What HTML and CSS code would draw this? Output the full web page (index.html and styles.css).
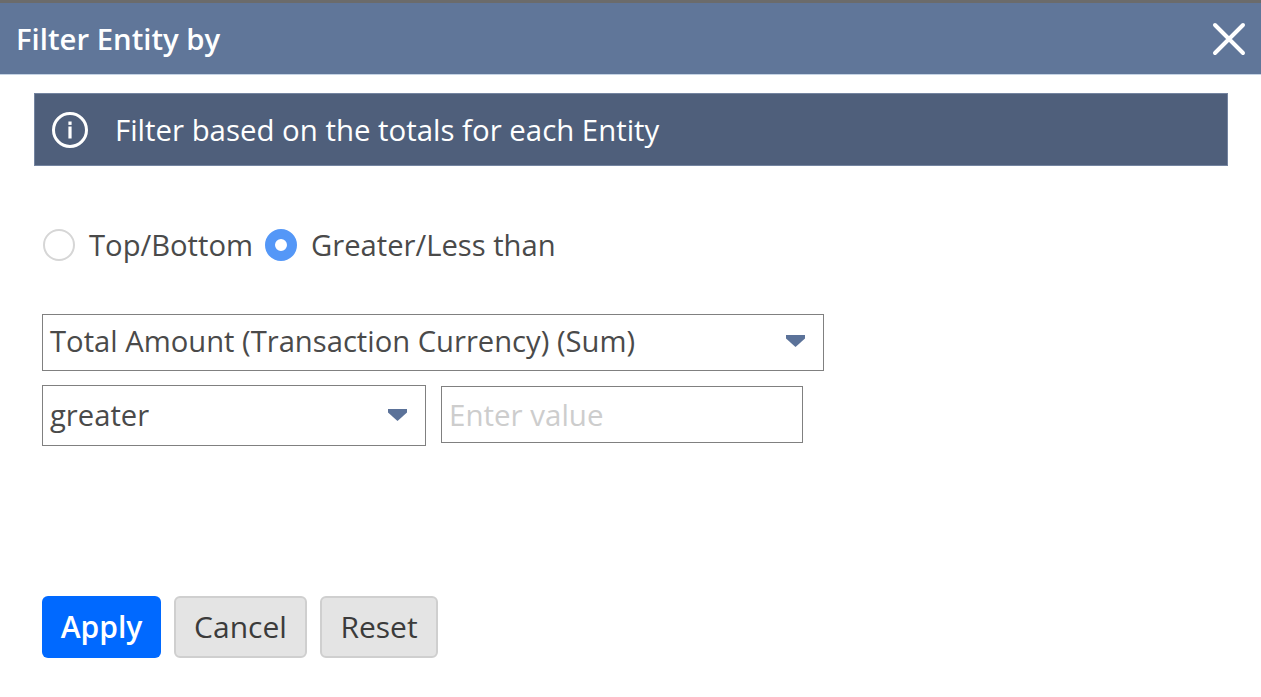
FILE: index.html
```html
<!DOCTYPE html>
<html lang="en">
<head>
    <meta charset="UTF-8">
    <title>Filter Entity by</title>
    <link rel="stylesheet" href="styles.css">
</head>
<body>

<div class="dialog">
    <div class="dialog-header">
        <div class="dialog-title">Filter Entity by</div>
        <svg class="close-icon" width="34" height="34" viewBox="0 0 34 34">
            <path d="M3 3L31 31M31 3L3 31" stroke="#fff" stroke-width="4" stroke-linecap="round" fill="none"/>
        </svg>
    </div>

    <div class="dialog-body">
        <div class="info-banner">
            <svg class="info-icon" width="38" height="38" viewBox="0 0 38 38">
                <circle cx="19" cy="19" r="16.5" stroke="#fff" stroke-width="3" fill="none"/>
                <rect x="17.4" y="10.5" width="3.2" height="3.4" fill="#fff"/>
                <rect x="17.4" y="15.5" width="3.2" height="12" fill="#fff"/>
            </svg>
            <span>Filter based on the totals for each Entity</span>
        </div>

        <div class="radio-row">
            <span class="radio"></span>
            <span class="radio-label">Top/Bottom</span>
            <span class="radio checked"></span>
            <span class="radio-label">Greater/Less than</span>
        </div>

        <div class="select select-wide">
            <span>Total Amount (Transaction Currency) (Sum)</span>
            <span class="caret"></span>
        </div>

        <div class="filter-row">
            <div class="select select-small">
                <span>greater</span>
                <span class="caret"></span>
            </div>
            <div class="value-input">Enter value</div>
        </div>

        <div class="buttons">
            <button class="btn btn-primary">Apply</button>
            <button class="btn btn-cancel">Cancel</button>
            <button class="btn btn-reset">Reset</button>
        </div>
    </div>
</div>

</body>
</html>
```

FILE: styles.css
```css
body {
    margin: 0;
    background-color: #fff;
    font-family: "Open Sans", Arial, sans-serif;
    color: #4a4a4a;
}

.dialog {
    width: 1261px;
    height: 697px;
    overflow: hidden;
    border-top: 3px solid #6b6b6b;
    box-sizing: border-box;
}

.dialog-header {
    height: 72px;
    background-color: #607699;
    border-bottom: 1px solid #c5d3e4;
    box-sizing: border-box;
    display: flex;
    align-items: center;
    justify-content: space-between;
    padding: 0 15px 0 16px;
}

.dialog-title {
    color: white;
    font-size: 29.3px;
    font-weight: 600;
}

.dialog-body {
    padding: 18px 33px 0 34px;
}

.info-banner {
    height: 73px;
    background-color: #4f5f7b;
    border: 1px solid #7484a0;
    box-sizing: border-box;
    display: flex;
    align-items: center;
    padding-left: 16px;
    color: white;
    font-size: 29.4px;
}

.info-icon {
    margin-right: 26px;
}

.radio-row {
    display: flex;
    align-items: center;
    margin: 63px 0 0 9px;
    height: 32px;
    font-size: 29.2px;
}

.radio {
    width: 32px;
    height: 32px;
    border: 2px solid #d6d6d6;
    border-radius: 50%;
    box-sizing: border-box;
    margin-right: 14px;
}

.radio.checked {
    border: 10px solid #5497f7;
    background-color: white;
}

.radio-label {
    margin-right: 12px;
}

.select {
    border: 1.5px solid #808080;
    box-sizing: border-box;
    display: flex;
    align-items: center;
    justify-content: space-between;
    padding: 0 18px 3px 7px;
    font-size: 29.2px;
    margin-left: 8px;
}

.select-wide {
    width: 782px;
    height: 57px;
    margin-top: 53px;
}

.select-small {
    width: 384px;
    height: 61px;
    padding-bottom: 1px;
}

.caret {
    width: 19px;
    height: 12px;
    background-color: #5b7299;
    clip-path: polygon(0 0, 100% 0, 100% 30%, 50% 100%, 0 30%);
}

.filter-row {
    display: flex;
    align-items: flex-start;
    margin-top: 14px;
}

.value-input {
    width: 362px;
    height: 57px;
    margin: 1px 0 0 15px;
    border: 1.5px solid #808080;
    box-sizing: border-box;
    padding-left: 7px;
    display: flex;
    align-items: center;
    color: #cdcdcd;
    font-size: 29.5px;
}

.buttons {
    display: flex;
    gap: 13px;
    margin: 150px 0 0 8px;
}

.btn {
    height: 62px;
    border-radius: 6px;
    box-sizing: border-box;
    font-family: "Open Sans", Arial, sans-serif;
    font-size: 30px;
    padding: 0 0 2px;
    cursor: pointer;
}

.btn-primary {
    width: 119px;
    background-color: #0069ff;
    border: none;
    color: white;
    font-weight: 600;
}

.btn-cancel, .btn-reset {
    background-color: #e4e4e4;
    border: 2px solid #cfcfcf;
    color: #3b3b3b;
}

.btn-cancel {
    width: 133px;
}

.btn-reset {
    width: 118px;
}
```
